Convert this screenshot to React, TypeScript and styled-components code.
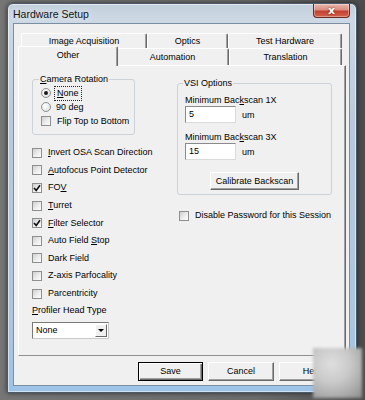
import React from "react";
import styled, { createGlobalStyle } from "styled-components";

const GlobalStyle = createGlobalStyle`
  html, body { margin: 0; padding: 0; }
  body {
    width: 365px;
    height: 400px;
    overflow: hidden;
    background: linear-gradient(90deg, #767676 0%, #6c6c6c 70%, #4c4c4c 100%);
    font-family: "Liberation Sans", Arial, sans-serif;
    font-size: 9px;
    line-height: 11px;
    color: #000;
  }
`;

const Screen = styled.div`
  position: relative;
  width: 365px;
  height: 400px;
  box-sizing: border-box;
  padding: 3px 8px 0 7px;
`;

const Frame = styled.div`
  height: 390px;
  box-sizing: border-box;
  display: flex;
  flex-direction: column;
  border: 1px solid #4a5a6a;
  border-radius: 6px 6px 0 0;
  background: linear-gradient(180deg, #c3d0dc 0%, #ccd9e5 4%, #b8cadb 30%, #acc6de 80%, #9cc3e6 100%);
  box-shadow: 0 0 5px rgba(0, 0, 0, 0.6), inset 0 0 0 1px rgba(255, 255, 255, 0.5);
  padding: 0 6px 6px 5px;
`;

const TitleBar = styled.div`
  height: 19px;
  display: flex;
  align-items: flex-start;
`;

const Title = styled.div`
  padding-top: 4px;
  font-size: 10.5px;
  line-height: 12px;
  color: #111;
  text-shadow: 0 0 6px rgba(255, 255, 255, 0.9);
`;

const CloseButton = styled.div`
  margin-left: auto;
  width: 37px;
  height: 14px;
  box-sizing: border-box;
  border: 1px solid #6a2a22;
  border-top: none;
  border-radius: 0 0 4px 4px;
  background: linear-gradient(180deg, #eab7ad 0%, #dc8d7f 45%, #c4412f 55%, #d2624d 100%);
  box-shadow: inset 0 0 0 1px rgba(255, 255, 255, 0.35);
  display: flex;
  align-items: center;
  justify-content: center;
  color: #fff;
  font-family: "DejaVu Sans", sans-serif;
  font-weight: bold;
  font-size: 11px;
  line-height: 11px;
  text-shadow: 0 0 2px #5a1a10;
`;

const Client = styled.div`
  flex: 1;
  display: flex;
  flex-direction: column;
  background: #f0f0f0;
  border: 1px solid #7b8fa2;
  padding: 9px 3px 4px 4px;
`;

const TabRow = styled.div<{ $h: number; $indent: number }>`
  display: flex;
  height: ${(p) => p.$h}px;
  padding-left: ${(p) => p.$indent}px;
  position: relative;
  z-index: 1;
`;

const Tab = styled.div<{ $w: number; $selected?: boolean }>`
  width: ${(p) => p.$w}px;
  box-sizing: border-box;
  display: flex;
  justify-content: center;
  align-items: center;
  background: #f0f0f0;
  border-top: 1px solid #fff;
  border-left: 1px solid #fff;
  border-right: 1px solid #696969;
  box-shadow: inset -1px 0 0 #a0a0a0;
  border-radius: 2px 2px 0 0;
  padding-top: 1px;
  ${(p) =>
    p.$selected &&
    `
    margin: -2px -2px -1px -2px;
    padding-bottom: 3px;
    position: relative;
    z-index: 2;
  `}
`;

const Panel = styled.div`
  height: 291px;
  box-sizing: border-box;
  border-top: 1px solid #fff;
  border-left: 1px solid #fff;
  border-right: 1px solid #696969;
  border-bottom: 1px solid #8f8f8f;
  box-shadow: inset -1px 0 0 #a0a0a0;
  display: grid;
  grid-template-columns: 145px 155px;
  align-items: start;
  padding: 8px 0 0 13px;
`;

const Column = styled.div<{ $top?: number }>`
  display: flex;
  flex-direction: column;
  margin-top: ${(p) => p.$top ?? 0}px;
`;

const Group = styled.fieldset<{ $w: number; $pl: number; $pt: number; $pb: number }>`
  width: ${(p) => p.$w}px;
  box-sizing: border-box;
  margin: 0;
  border: 1px solid #cbd2d8;
  border-radius: 3px;
  padding: ${(p) => `${p.$pt}px 5px ${p.$pb}px ${p.$pl}px`};
  display: flex;
  flex-direction: column;
`;

const Legend = styled.legend`
  padding: 0 1px;
  margin-left: -2px;
  line-height: 11px;
`;

const Mn = styled.u`
  text-decoration: underline;
  text-underline-offset: 1px;
`;

const OptionRow = styled.div<{ $h: number; $gap: number; $pl?: number }>`
  display: flex;
  align-items: center;
  height: ${(p) => p.$h}px;
  gap: ${(p) => p.$gap}px;
  padding-left: ${(p) => p.$pl ?? 0}px;
  white-space: nowrap;
`;

const RadioCircle = styled.span<{ $on?: boolean }>`
  width: 10px;
  height: 10px;
  box-sizing: border-box;
  border-radius: 50%;
  border: 1px solid #8e8f8f;
  background: radial-gradient(circle at 35% 35%, #ffffff 0%, #e6e6e6 70%, #cfcfcf 100%);
  display: flex;
  align-items: center;
  justify-content: center;
  &::after {
    content: "";
    width: 4px;
    height: 4px;
    border-radius: 50%;
    background: ${(p) => (p.$on ? "#1a1a1a" : "transparent")};
  }
`;

const Focus = styled.span`
  outline: 1px dotted #222;
  outline-offset: 1px;
  padding: 0 1px;
`;

const CheckBox = styled.span`
  width: 10px;
  height: 10px;
  box-sizing: border-box;
  border: 1px solid #8f8f8f;
  background: linear-gradient(135deg, #cfcfcf 0%, #ededed 55%, #fdfdfd 100%);
  display: flex;
  align-items: center;
  justify-content: center;
  flex-shrink: 0;
`;

const CheckList = styled.div`
  margin-top: 9px;
  display: flex;
  flex-direction: column;
`;

const FieldLabel = styled.div<{ $top?: number }>`
  margin-top: ${(p) => p.$top ?? 0}px;
  height: 11px;
`;

const Select = styled.div`
  margin-top: 6px;
  width: 77px;
  height: 17px;
  box-sizing: border-box;
  border: 1px solid;
  border-color: #7a7a7a #c9c9c9 #c9c9c9 #7a7a7a;
  background: #fff;
  display: flex;
  align-items: center;
  padding: 0 1px 0 3px;
`;

const SelectText = styled.span`
  flex: 1;
`;

const DropButton = styled.span`
  width: 12px;
  height: 13px;
  box-sizing: border-box;
  border: 1px solid;
  border-color: #fff #696969 #696969 #fff;
  background: #f0f0f0;
  display: flex;
  align-items: center;
  justify-content: center;
  &::after {
    content: "";
    border-left: 3px solid transparent;
    border-right: 3px solid transparent;
    border-top: 3px solid #000;
  }
`;

const InputRow = styled.div`
  display: flex;
  align-items: flex-end;
  gap: 6px;
`;

const TextBox = styled.div`
  width: 51px;
  height: 17px;
  box-sizing: border-box;
  border: 1px solid;
  border-color: #8a8a8a #dadada #dadada #8a8a8a;
  background: #fff;
  padding: 2px 0 0 3px;
`;

const Unit = styled.span`
  margin-bottom: 2px;
`;

const PushButton = styled.div<{ $w: number; $h: number; $default?: boolean }>`
  width: ${(p) => p.$w}px;
  height: ${(p) => p.$h}px;
  box-sizing: border-box;
  display: flex;
  align-items: center;
  justify-content: center;
  background: #f0f0f0;
  border: 1px solid;
  border-color: ${(p) => (p.$default ? "#000" : "#fff #696969 #696969 #fff")};
  box-shadow: ${(p) =>
    p.$default
      ? "inset 1px 1px 0 #fff, inset -1px -1px 0 #696969, inset -2px -2px 0 #a0a0a0"
      : "inset -1px -1px 0 #a0a0a0"};
`;

const ButtonBar = styled.div`
  margin-top: 6px;
  display: flex;
  justify-content: flex-end;
  gap: 5px;
  padding-right: 1px;
`;

const ButtonRowCenter = styled.div`
  margin-top: 12px;
  display: flex;
  justify-content: center;
  padding-right: 2px;
`;

const DisableRow = styled.div`
  margin-top: 12px;
`;

const Smudge = styled.div`
  position: absolute;
  left: 313px;
  top: 348px;
  width: 49px;
  height: 50px;
  background: radial-gradient(circle at 38% 32%, #dedede 0%, #cacaca 40%, #a8a8a8 75%, #8c8c8c 100%);
  filter: blur(1.5px);
`;

const Check = () => (
  <svg width="8" height="8" viewBox="0 0 8 8">
    <polyline points="1,4 3.2,6.4 7,1.2" fill="none" stroke="#111" strokeWidth="1.6" />
  </svg>
);

const CheckOption = ({
  label,
  checked,
  gap = 6,
  pl = 0,
}: {
  label: React.ReactNode;
  checked?: boolean;
  gap?: number;
  pl?: number;
}) => (
  <OptionRow $h={17.6} $gap={gap} $pl={pl}>
    <CheckBox>{checked && <Check />}</CheckBox>
    <span>{label}</span>
  </OptionRow>
);

export default function App() {
  return (
    <Screen>
      <GlobalStyle />
      <Frame>
        <TitleBar>
          <Title>Hardware Setup</Title>
          <CloseButton>x</CloseButton>
        </TitleBar>
        <Client>
          <TabRow $h={15} $indent={3}>
            <Tab $w={126}>Image Acquisition</Tab>
            <Tab $w={81}>Optics</Tab>
            <Tab $w={114}>Test Hardware</Tab>
          </TabRow>
          <TabRow $h={17} $indent={2}>
            <Tab $w={100} $selected>
              Other
            </Tab>
            <Tab $w={113}>Automation</Tab>
            <Tab $w={113}>Translation</Tab>
          </TabRow>
          <Panel>
            <Column>
              <Group $w={78} $pl={8} $pt={1} $pb={6}>
                <Legend>
                  <Mn>C</Mn>amera Rotation
                </Legend>
                <OptionRow $h={14} $gap={5}>
                  <RadioCircle $on />
                  <Focus>
                    <Mn>N</Mn>one
                  </Focus>
                </OptionRow>
                <OptionRow $h={14} $gap={5}>
                  <RadioCircle />
                  <span>90 deg</span>
                </OptionRow>
                <OptionRow $h={14} $gap={6}>
                  <CheckBox />
                  <span>Flip Top to Bottom</span>
                </OptionRow>
              </Group>
              <CheckList>
                <CheckOption label={<><Mn>I</Mn>nvert OSA Scan Direction</>} />
                <CheckOption label={<><Mn>A</Mn>utofocus Point Detector</>} />
                <CheckOption checked label={<>FO<Mn>V</Mn></>} />
                <CheckOption label={<><Mn>T</Mn>urret</>} />
                <CheckOption checked label={<><Mn>F</Mn>ilter Selector</>} />
                <CheckOption label={<>Auto Field <Mn>S</Mn>top</>} />
                <CheckOption label="Dark Field" />
                <CheckOption label="Z-axis Parfocality" />
                <CheckOption label="Parcentricity" />
              </CheckList>
              <FieldLabel $top={3}>
                <Mn>P</Mn>rofiler Head Type
              </FieldLabel>
              <Select>
                <SelectText>None</SelectText>
                <DropButton />
              </Select>
            </Column>
            <Column $top={4}>
              <Group $w={155} $pl={7} $pt={6} $pb={4}>
                <Legend>VSI Options</Legend>
                <FieldLabel>
                  Minimum Bac<Mn>k</Mn>scan 1X
                </FieldLabel>
                <InputRow>
                  <TextBox>5</TextBox>
                  <Unit>um</Unit>
                </InputRow>
                <FieldLabel $top={9}>
                  Minimum Bac<Mn>k</Mn>scan 3X
                </FieldLabel>
                <InputRow>
                  <TextBox>15</TextBox>
                  <Unit>um</Unit>
                </InputRow>
                <ButtonRowCenter>
                  <PushButton $w={89} $h={18}>
                    Calibrate Backscan
                  </PushButton>
                </ButtonRowCenter>
              </Group>
              <DisableRow>
                <CheckOption pl={2} label="Disable Password for this Session" />
              </DisableRow>
            </Column>
          </Panel>
          <ButtonBar>
            <PushButton $w={65} $h={19} $default>
              Save
            </PushButton>
            <PushButton $w={66} $h={19}>
              Cancel
            </PushButton>
            <PushButton $w={66} $h={19}>
              Help
            </PushButton>
          </ButtonBar>
        </Client>
      </Frame>
      <Smudge />
    </Screen>
  );
}
